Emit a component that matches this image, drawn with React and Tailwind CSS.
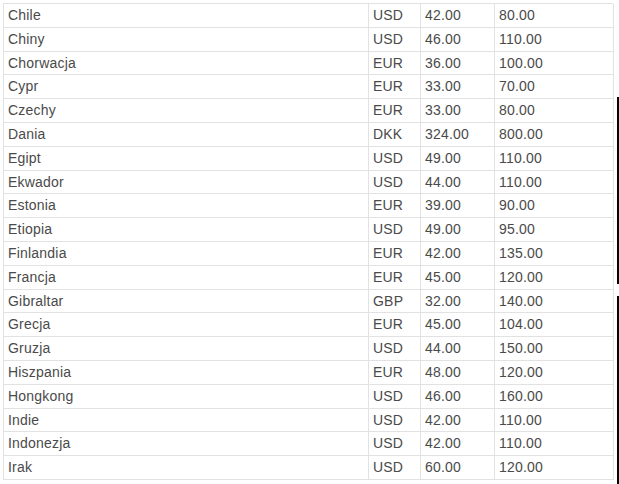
const rows = [
  ["Chile", "USD", "42.00", "80.00"],
  ["Chiny", "USD", "46.00", "110.00"],
  ["Chorwacja", "EUR", "36.00", "100.00"],
  ["Cypr", "EUR", "33.00", "70.00"],
  ["Czechy", "EUR", "33.00", "80.00"],
  ["Dania", "DKK", "324.00", "800.00"],
  ["Egipt", "USD", "49.00", "110.00"],
  ["Ekwador", "USD", "44.00", "110.00"],
  ["Estonia", "EUR", "39.00", "90.00"],
  ["Etiopia", "USD", "49.00", "95.00"],
  ["Finlandia", "EUR", "42.00", "135.00"],
  ["Francja", "EUR", "45.00", "120.00"],
  ["Gibraltar", "GBP", "32.00", "140.00"],
  ["Grecja", "EUR", "45.00", "104.00"],
  ["Gruzja", "USD", "44.00", "150.00"],
  ["Hiszpania", "EUR", "48.00", "120.00"],
  ["Hongkong", "USD", "46.00", "160.00"],
  ["Indie", "USD", "42.00", "110.00"],
  ["Indonezja", "USD", "42.00", "110.00"],
  ["Irak", "USD", "60.00", "120.00"],
];

export default function App() {
  return (
    <div
      className="relative w-[619px] h-[484px] overflow-hidden bg-white pl-[3px] pt-[3px] text-[14px] text-[#4a4a4a] tracking-[0.2px]"
      style={{ fontFamily: '"Liberation Sans", Arial, sans-serif' }}
    >
      <div className="w-[610px] border-t border-l border-[#e2e2e2]">
        {rows.map((r, i) => (
          <div
            key={i}
            className="grid grid-cols-[365px_52px_74px_119px] h-[23.8px] leading-[22px]"
          >
            <div className="border-r border-b border-[#e2e2e2] pl-[4px]">{r[0]}</div>
            <div className="border-r border-b border-[#e2e2e2] pl-[4px]">{r[1]}</div>
            <div className="border-r border-b border-[#e2e2e2] pl-[4px]">{r[2]}</div>
            <div className="border-r border-b border-[#e2e2e2] pl-[4px]">{r[3]}</div>
          </div>
        ))}
      </div>
      <div className="absolute left-[617px] top-[97px] h-[187px] w-[2px] bg-black" />
      <div className="absolute left-[617px] top-[296px] h-[188px] w-[2px] bg-black" />
    </div>
  );
}
